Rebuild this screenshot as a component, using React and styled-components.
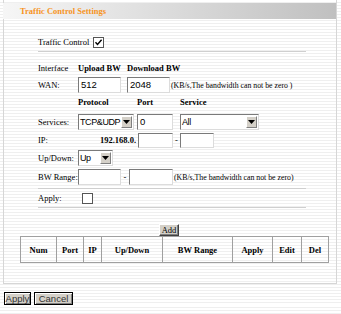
import React from "react";
import styled, { createGlobalStyle } from "styled-components";

// ------------- GLOBAL -------------
const Global = createGlobalStyle`
  html, body {
    margin: 0;
    padding: 0;
  }
  body {
    background: repeating-linear-gradient(to bottom, #ffffff 0px, #ffffff 2px, #efefef 2px, #efefef 3px);
  }
`;

const serif = `"Liberation Serif", "Times New Roman", "DejaVu Serif", serif`;
const sans = `"Liberation Sans", Arial, sans-serif`;

const columns = [
  { name: "Num", w: 35 },
  { name: "Port", w: 26 },
  { name: "IP", w: 17 },
  { name: "Up/Down", w: 60 },
  { name: "BW Range", w: 69 },
  { name: "Apply", w: 39 },
  { name: "Edit", w: 28 },
  { name: "Del", w: 26 },
];

const App = () => {
  return (
    <Page>
      <Global />
      <Panel>
        <Header>Traffic Control Settings</Header>
        <Body>
          <Row h={16} mt={15}>
            <span>Traffic Control</span>
            <Check checked style={{ marginLeft: 4 }} />
          </Row>
          <Rule mt={1} />
          <Row h={16} mt={7}>
            <Label>Interface</Label>
            <Bold w={49}>Upload BW</Bold>
            <Bold>Download BW</Bold>
          </Row>
          <Row h={16} mt={1}>
            <Label>WAN:</Label>
            <TextBox w={43} value="512" />
            <Gap w={6} />
            <TextBox w={43} value="2048" />
            <Note>(KB/s,The bandwidth can not be zero )</Note>
          </Row>
          <Row h={16} mt={1}>
            <Label />
            <Bold w={59}>Protocol</Bold>
            <Bold w={43}>Port</Bold>
            <Bold>Service</Bold>
          </Row>
          <Row h={16} mt={4}>
            <Label>Services:</Label>
            <Select w={56} value="TCP&UDP" />
            <Gap w={3} />
            <TextBox w={36} value="0" />
            <Gap w={7} />
            <Select w={79} value="All" />
          </Row>
          <Row h={16} mt={2}>
            <Label>IP:</Label>
            <Bold w={58} right>192.168.0.</Bold>
            <Gap w={2} />
            <TextBox w={35} h={15} value="" />
            <Dash w={7}>-</Dash>
            <TextBox w={34} h={15} value="" />
          </Row>
          <Row h={16} mt={2}>
            <Label>Up/Down:</Label>
            <Select w={35} value="Up" />
          </Row>
          <Row h={16} mt={3}>
            <Label>BW Range:</Label>
            <TextBox w={43} value="" />
            <Dash w={8}>-</Dash>
            <TextBox w={44} value="" />
            <Note>(KB/s,The bandwidth can not be zero)</Note>
          </Row>
          <Rule mt={3} />
          <Row h={14} mt={1}>
            <Label>Apply:</Label>
            <Gap w={4} />
            <Check />
          </Row>
          <Rule mt={2} />
        </Body>
        <AddWrap>
          <SmallButton>Add</SmallButton>
        </AddWrap>
        <Table>
          <thead>
            <tr>
              {columns.map((c) => (
                <Th key={c.name} style={{ width: c.w }}>{c.name}</Th>
              ))}
            </tr>
          </thead>
        </Table>
      </Panel>
      <Footer>
        <Button w={27}>Apply</Button>
        <Button w={39}>Cancel</Button>
      </Footer>
    </Page>
  );
};

const Check = ({ checked, style }) => (
  <CheckBox style={style}>
    {checked && (
      <svg width="9" height="9" viewBox="0 0 9 9">
        <path d="M1.5 4.2 L3.5 6.4 L7.6 1.8" fill="none" stroke="#000" strokeWidth="1.4" />
      </svg>
    )}
  </CheckBox>
);

const TextBox = ({ w, h, value }) => (
  <Input w={w} h={h}>{value}</Input>
);

const Select = ({ w, value }) => (
  <SelectBox w={w}>
    <SelectText>{value}</SelectText>
    <Arrow>
      <svg width="7" height="4" viewBox="0 0 7 4">
        <path d="M0 0 H7 L3.5 4 Z" fill="#000" />
      </svg>
    </Arrow>
  </SelectBox>
);

//--------------------------------- STYLES ---------------------------------
const Page = styled.div`
  font-family: ${serif};
  font-size: 8.5px;
  color: #000;
`;

const Panel = styled.div`
  margin-left: 3px;
  width: 334px;
  padding-top: 3px;
  height: 284px;
  border-left: 1px solid #d6d6d6;
  border-right: 1px solid #d6d6d6;
  border-bottom: 1px solid #d6d6d6;
  box-sizing: border-box;
`;

const Header = styled.div`
  height: 16px;
  margin-left: -1px;
  padding-left: 17px;
  line-height: 16px;
  background: linear-gradient(to right, #f6f6f6 0%, #dedede 45%, #c0c0c0 100%);
  color: #f7941d;
  font-weight: bold;
  font-size: 8.5px;
`;

const Body = styled.div`
  padding-left: 34px;
  width: 268px;
`;

const Row = styled.div`
  display: flex;
  align-items: center;
  height: ${(p) => p.h}px;
  margin-top: ${(p) => p.mt || 0}px;
  white-space: nowrap;
`;

const Label = styled.span`
  width: 40px;
  flex: none;
`;

const Bold = styled.span`
  font-weight: bold;
  width: ${(p) => (p.w ? `${p.w}px` : "auto")};
  text-align: ${(p) => (p.right ? "right" : "left")};
  flex: none;
`;

const Gap = styled.span`
  width: ${(p) => p.w}px;
  flex: none;
`;

const Dash = styled.span`
  width: ${(p) => p.w}px;
  text-align: center;
  flex: none;
`;

const Note = styled.span`
  margin-left: 1px;
  font-size: 7.8px;
`;

const Rule = styled.div`
  height: 0;
  border-top: 1px solid #cfcfcf;
  border-bottom: 1px solid #fff;
  margin-top: ${(p) => p.mt || 0}px;
`;

const CheckBox = styled.span`
  width: 9px;
  height: 9px;
  border: 1px solid #555;
  background: #fff;
  display: inline-flex;
  align-items: center;
  justify-content: center;
  flex: none;
`;

const Input = styled.div`
  width: ${(p) => p.w}px;
  height: ${(p) => p.h || 16}px;
  box-sizing: border-box;
  border: 1px solid #7a7a7a;
  border-right-color: #dcdcdc;
  border-bottom-color: #dcdcdc;
  background: #fff;
  font-family: ${sans};
  font-size: 9.5px;
  line-height: 14px;
  padding-left: 2px;
  flex: none;
`;

const SelectBox = styled.div`
  width: ${(p) => p.w}px;
  height: 16px;
  box-sizing: border-box;
  border: 1px solid #7a7a7a;
  border-right-color: #dcdcdc;
  border-bottom-color: #dcdcdc;
  background: #fff;
  display: flex;
  align-items: center;
  font-family: ${sans};
  font-size: 9px;
  flex: none;
`;

const SelectText = styled.span`
  flex: 1;
  padding-left: 1px;
  overflow: hidden;
  letter-spacing: -0.4px;
`;

const Arrow = styled.span`
  width: 11px;
  height: 12px;
  margin-right: 1px;
  background: #d4d0c8;
  border: 1px solid #fff;
  border-right-color: #808080;
  border-bottom-color: #808080;
  box-sizing: border-box;
  display: flex;
  align-items: center;
  justify-content: center;
  flex: none;
`;

const AddWrap = styled.div`
  display: flex;
  justify-content: center;
  margin-top: 15px;
  padding-right: 1px;
`;

const SmallButton = styled.button`
  font-family: ${serif};
  font-size: 8.5px;
  height: 12px;
  padding: 0 2px;
  line-height: 9px;
  background: #d4d0c8;
  border: 1px solid;
  border-color: #fff #404040 #404040 #fff;
  box-shadow: inset -1px -1px #808080;
  margin-right: 1px;
`;

const Table = styled.table`
  margin-left: 16px;
  border-collapse: collapse;
  width: 301px;
  height: 27px;
  table-layout: fixed;
`;

const Th = styled.th`
  border: 1px solid #a0a0a0;
  font-family: ${serif};
  font-size: 8.5px;
  font-weight: bold;
  padding: 0;
  text-align: center;
  height: 25px;
`;

const Footer = styled.div`
  display: flex;
  gap: 3px;
  padding-left: 4px;
  margin-top: 8px;
`;

const Button = styled.button`
  font-family: ${sans};
  font-size: 9.5px;
  width: ${(p) => p.w}px;
  height: 13px;
  padding: 0;
  line-height: 10px;
  color: #333;
  background: #d4d0c8;
  border: 1px solid #000;
  box-shadow: inset 1px 1px #fff, inset -1px -1px #808080;
`;

export default App;
